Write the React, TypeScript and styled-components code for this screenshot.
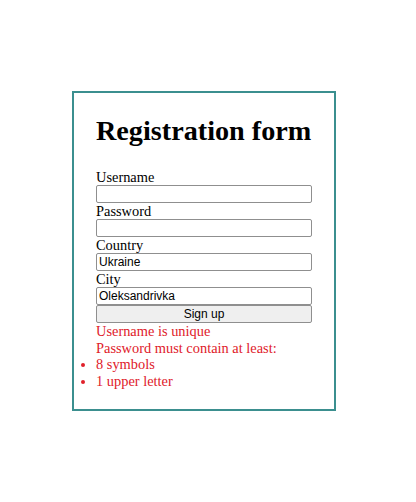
import styled, { createGlobalStyle } from 'styled-components'

const GlobalStyle = createGlobalStyle`
  html, body {
    margin: 0;
    padding: 0;
    background: #ffffff;
  }
  body {
    font-family: "Liberation Serif", "Times New Roman", serif;
    font-size: 14.4px;
    color: #000;
  }
`

const Page = styled.div`
  padding: 91px 0 0 72px;
`

const Card = styled.form`
  box-sizing: border-box;
  width: 264px;
  height: 320px;
  border: 2px solid #3b8f8f;
  padding: 22px 22px 0 22px;
  display: flex;
  flex-direction: column;
`

const Title = styled.h1`
  margin: 0 0 22px 0;
  font-size: 28.2px;
  font-weight: bold;
  line-height: 1.15;
  white-space: nowrap;
`

const Label = styled.label`
  display: block;
  line-height: 16px;
`

const Input = styled.input`
  box-sizing: border-box;
  width: 216px;
  height: 18px;
  margin: 0;
  padding: 0 2px;
  border: 1px solid #8f8f8f;
  border-radius: 2px;
  font-family: "Liberation Sans", Arial, sans-serif;
  font-size: 12px;
  color: #000;
  background: #fff;
`

const Button = styled.button`
  box-sizing: border-box;
  width: 216px;
  height: 18px;
  margin: 0;
  padding: 0;
  border: 1px solid #8f8f8f;
  border-radius: 2px;
  background: #efefef;
  font-family: "Liberation Sans", Arial, sans-serif;
  font-size: 12px;
  color: #000;
`

const Error = styled.div`
  color: #e0202a;
  line-height: 16.5px;
`

const List = styled.ul`
  margin: 0;
  padding-left: 0;
  color: #e0202a;
  line-height: 16.5px;
`

const Item = styled.li`
  list-style-position: outside;
`

export default function App() {
  return (
    <>
      <GlobalStyle />
      <Page>
        <Card onSubmit={e => e.preventDefault()}>
          <Title>Registration form</Title>
          <Label>Username</Label>
          <Input type="text" />
          <Label>Password</Label>
          <Input type="password" />
          <Label>Country</Label>
          <Input type="text" defaultValue="Ukraine" />
          <Label>City</Label>
          <Input type="text" defaultValue="Oleksandrivka" />
          <Button type="submit">Sign up</Button>
          <Error>Username is unique</Error>
          <Error>Password must contain at least:</Error>
          <List>
            <Item>8 symbols</Item>
            <Item>1 upper letter</Item>
          </List>
        </Card>
      </Page>
    </>
  )
}
